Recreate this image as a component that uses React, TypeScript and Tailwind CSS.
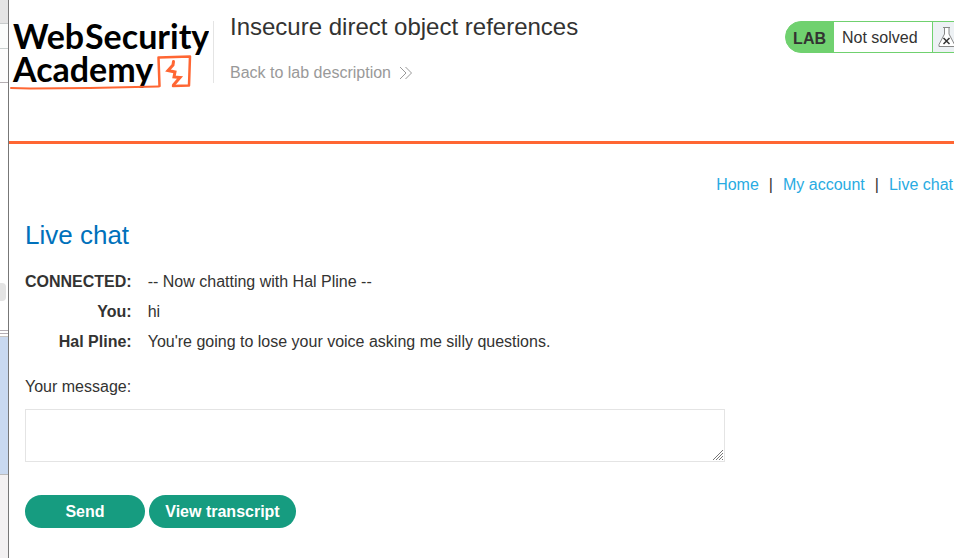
import React from "react";

function Logo() {
  return (
    <svg
      width="200"
      height="76"
      viewBox="9 16 200 76"
      role="img"
      aria-label="Web Security Academy"
      className="shrink-0"
    >
      <g fontFamily="Lato, sans-serif" fontWeight="700" fontSize="34" fill="#000">
        <text x="13" y="49">Web</text>
        <text x="85" y="49">Security</text>
        <text x="13" y="82">Academy</text>
      </g>
      <g fill="none" stroke="#ff6633" strokeLinejoin="round" strokeLinecap="round">
        <path d="M11 88L30 88.600L90 88L158.500 86.500" strokeWidth="2" />
        <path d="M159.500 86L158.500 57.500L190 56.500L189 85.500L173 86" strokeWidth="2.500" />
        <path d="M173.500 61.500L173 65L168 70.500L175 72L174 77L180 77.500L173.500 85" strokeWidth="3" strokeLinejoin="miter" />
      </g>
    </svg>
  );
}

function Flask() {
  return (
    <svg width="20" height="22" viewBox="0 0 20 22" fill="none" aria-hidden="true" className="shrink-0">
      <path d="M5 1.500H12M6.500 2V8L1 18.500V20.500H16.500V18.500L11 8V2" fill="#fff" stroke="#888" strokeWidth="1" />
      <path d="M5.500 12L11.500 18M11.500 12L5.500 18" stroke="#333" strokeWidth="1.500" />
    </svg>
  );
}

function Gutter() {
  return (
    <div aria-hidden="true" className="flex w-[9px] shrink-0 flex-col border-r border-[#777] bg-white">
      <div className="h-6 border-b border-[#c8cccc] bg-[#e4e4e4]" />
      <div className="h-[25px] border-b border-[#c8d0ce] bg-[#fbfdfc]" />
      <div className="h-[34px] border-b border-[#b4aeb2] bg-[#fdfdfd]" />
      <div className="h-[200px]" />
      <div className="h-[18px] w-1.5 rounded-r bg-[#e4e4e4]" />
      <div className="h-[30px] border-b border-[#b4aeb4]" />
      <div className="h-[3px] border-b border-[#b4aeb4]" />
      <div className="h-[3px] border-b border-[#c8c4c0]" />
      <div className="h-[138px] border-b border-[#bbb] bg-[#c9d9f0]" />
      <div className="grow bg-[#f3f1f2]" />
    </div>
  );
}

const messages = [
  { from: "CONNECTED:", text: "-- Now chatting with Hal Pline --" },
  { from: "You:", text: "hi" },
  { from: "Hal Pline:", text: "You're going to lose your voice asking me silly questions." },
];

export default function App() {
  return (
    <div className="flex min-h-screen overflow-hidden bg-white font-['Liberation_Sans',Arial,sans-serif] text-base text-[#333332]">
      <Gutter />
      <div className="min-w-0 grow">
        <header className="flex h-36 items-start overflow-hidden border-b-[3px] border-[#ff6633]">
          <div className="flex shrink-0 pt-4">
            <Logo />
            <div className="mt-[5px] ml-1 h-[62px] w-px bg-[#e4e4e4]" />
          </div>
          <div className="min-w-0 grow pt-[11px] pl-4">
            <h2 className="text-2xl leading-8 whitespace-nowrap">Insecure direct object references</h2>
            <a href="#lab" className="mt-5 flex items-center gap-2 leading-5 text-[#999]">
              Back to lab description
              <svg width="14" height="14" viewBox="0 0 14 14" fill="none" stroke="#999" aria-hidden="true">
                <path d="M1 1L7 7L1 13M6.500 1L12.500 7L6.500 13" />
              </svg>
            </a>
          </div>
          <div className="mt-[21px] -mr-4 flex h-8 shrink-0 rounded-l-full border border-[#70d16f] bg-[#70d16f] whitespace-nowrap">
            <span className="pr-2 pl-[7px] leading-[33px] font-bold">LAB</span>
            <span className="w-[98px] bg-white pl-2 leading-8">Not solved</span>
            <span className="flex w-[37px] items-center border-l border-[#70d16f] bg-[#edf1f4] pl-[5px]">
              <Flask />
            </span>
          </div>
        </header>

        <main className="pl-4">
          <nav className="flex justify-end gap-2.5 pt-[31px] pr-px leading-5">
            <a href="#home" className="text-[#29abe2]">Home</a>
            <span>|</span>
            <a href="#account" className="text-[#29abe2]">My account</a>
            <span>|</span>
            <a href="#chat" className="text-[#29abe2]">Live chat</a>
          </nav>

          <h1 className="mt-6 text-[26px] leading-8 text-[#0071bb]">Live chat</h1>

          <table className="mt-4">
            <tbody>
              {messages.map((m) => (
                <tr key={m.from} className="leading-[30px]">
                  <th scope="row" className="p-0 pr-4 text-right font-bold">{m.from}</th>
                  <td className="p-0">{m.text}</td>
                </tr>
              ))}
            </tbody>
          </table>

          <form onSubmit={(e) => e.preventDefault()}>
            <label htmlFor="message" className="mt-5 block leading-5">Your message:</label>
            <div className="relative mt-3 mr-4 max-w-[700px]">
              <textarea
                id="message"
                className="block h-[53px] w-full resize-none border border-[#e4e4e4] bg-white p-2 outline-none"
              />
              <svg
                width="12"
                height="12"
                viewBox="0 0 12 12"
                stroke="#777"
                aria-hidden="true"
                className="pointer-events-none absolute right-px bottom-px"
              >
                <path d="M1 11L11 1M4 11L11 4M7 11L11 7M10 11L11 10" strokeWidth="1" />
              </svg>
            </div>
            <div className="mt-[33px] flex gap-1 leading-[33px] font-bold text-white">
              <button type="submit" className="w-[120px] rounded-full bg-[#169c80]">Send</button>
              <button type="button" className="w-[147px] rounded-full bg-[#169c80]">View transcript</button>
            </div>
          </form>
        </main>
      </div>
    </div>
  );
}
